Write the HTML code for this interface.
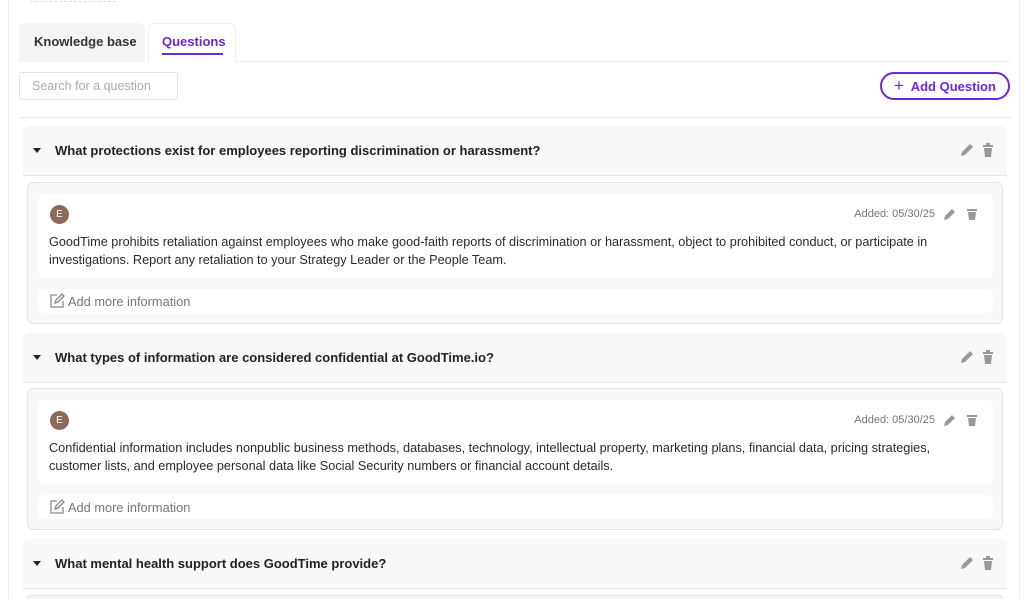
<!DOCTYPE html>
<html><head><meta charset="utf-8"><style>
*{box-sizing:border-box;margin:0;padding:0}
html,body{width:1024px;height:599px;overflow:hidden}
body{background:#fff;font-family:"Liberation Sans",sans-serif;color:#222;position:relative}
.a{position:absolute}
.hdr{position:absolute;left:23px;width:984px;height:50px;background:#f8f8fa;border-bottom:1px solid #e6e6ea;border-radius:6px 6px 0 0}
.hdr .t{position:absolute;left:32px;top:17px;font-size:13px;font-weight:bold;color:#222}
.hdr .c{position:absolute;left:10px;top:22px;width:0;height:0;border-left:4px solid transparent;border-right:4px solid transparent;border-top:5px solid #222}
.hdr .ic{position:absolute;right:12px;top:16px}
.box{position:absolute;left:27px;width:976px;height:142px;background:#f8f8fa;border:1px solid #e3e3e8;border-radius:6px}
.card{position:absolute;left:10px;top:11px;width:955px;height:84px;background:#fff;border-radius:6px}
.av{position:absolute;left:12px;top:11px;width:19px;height:19px;border-radius:50%;background:#8b6a5c;color:#fff;font-size:10px;text-align:center;line-height:19px}
.txt{position:absolute;left:11px;top:39px;width:925px;font-size:12.7px;line-height:18px;color:#2a2a2a}
.date{position:absolute;right:14px;top:13px;font-size:11px;color:#777;display:flex;align-items:center;gap:8px}
.more{position:absolute;left:10px;top:106px;width:955px;height:24px;background:#fff;border-radius:6px;font-size:12.8px;color:#777;padding:5px 0 0 30px}
.more svg{position:absolute;left:11px;top:4px}
</style></head><body>
<div class="a" style="left:8px;top:0;width:1px;height:599px;background:#eee"></div>
<div class="a" style="left:1019px;top:0;width:1px;height:599px;background:#eee"></div>
<div class="a" style="left:30px;top:0;width:86px;height:2px;border-bottom:1px dashed #ddd"></div>

<div class="a" style="left:19px;top:23px;width:126px;height:39px;background:#f5f5f5;border-radius:6px 6px 0 0;font-size:13px;font-weight:bold;color:#333;padding:11px 0 0 15px">Knowledge base</div>
<div class="a" style="left:148px;top:23px;width:88px;height:39px;background:#fff;border:1px solid #eee;border-bottom:none;border-radius:6px 6px 0 0;font-size:13px;font-weight:bold;color:#6d28d9;padding:10px 0 0 13px">Questions<div style="position:absolute;left:13px;top:29px;width:61px;height:2px;background:#6d28d9"></div></div>
<div class="a" style="left:236px;top:61px;width:775px;height:1px;background:#eee"></div>

<div class="a" style="left:19px;top:72px;width:159px;height:28px;border:1px solid #e2e2e2;border-radius:3px;font-size:12.5px;color:#aaa;padding:6px 0 0 12px">Search for a question</div>
<div class="a" style="left:880px;top:72px;width:130px;height:28px;border:2px solid #6d28d9;border-radius:14px;font-size:13px;font-weight:bold;color:#6d28d9;line-height:24px;text-align:center;white-space:nowrap"><span style="font-size:17px;font-weight:normal">+</span>&nbsp; Add Question</div>
<div class="a" style="left:19px;top:117px;width:992px;height:1px;background:#eaeaea"></div>

<div class="hdr" style="top:126px"><div class="c"></div><div class="t">What protections exist for employees reporting discrimination or harassment?</div>
<div class="ic"><svg width="36" height="16" viewBox="0 0 36 16"><path d="M2 14l1-4 8-8 3 3-8 8z" fill="#999"/><rect x="24" y="3" width="10" height="2" fill="#999"/><rect x="27" y="1" width="4" height="2" fill="#999"/><path d="M25 6h8l-1 9h-6z" fill="#999"/></svg></div></div>
<div class="box" style="top:182px"><div class="card"><div class="av">E</div><div class="date">Added: 05/30/25 <svg width="36" height="14" viewBox="0 0 36 14"><path d="M1 13l1-4 7-7 3 3-7 7z" fill="#999"/><rect x="24" y="2" width="10" height="2" fill="#999"/><path d="M25 5h8l-1 8h-6z" fill="#999"/></svg></div>
<div class="txt">GoodTime prohibits retaliation against employees who make good-faith reports of discrimination or harassment, object to prohibited conduct, or participate in investigations. Report any retaliation to your Strategy Leader or the People Team.</div></div>
<div class="more"><svg width="16" height="16" viewBox="0 0 16 16" fill="none" stroke="#888" stroke-width="1.3"><path d="M8 2H2v12h12V8"/><path d="M6 10l1-3 6-6 2 2-6 6z"/></svg>Add more information</div></div>

<div class="hdr" style="top:333px"><div class="c"></div><div class="t">What types of information are considered confidential at GoodTime.io?</div>
<div class="ic"><svg width="36" height="16" viewBox="0 0 36 16"><path d="M2 14l1-4 8-8 3 3-8 8z" fill="#999"/><rect x="24" y="3" width="10" height="2" fill="#999"/><rect x="27" y="1" width="4" height="2" fill="#999"/><path d="M25 6h8l-1 9h-6z" fill="#999"/></svg></div></div>
<div class="box" style="top:388px"><div class="card"><div class="av">E</div><div class="date">Added: 05/30/25 <svg width="36" height="14" viewBox="0 0 36 14"><path d="M1 13l1-4 7-7 3 3-7 7z" fill="#999"/><rect x="24" y="2" width="10" height="2" fill="#999"/><path d="M25 5h8l-1 8h-6z" fill="#999"/></svg></div>
<div class="txt">Confidential information includes nonpublic business methods, databases, technology, intellectual property, marketing plans, financial data, pricing strategies, customer lists, and employee personal data like Social Security numbers or financial account details.</div></div>
<div class="more"><svg width="16" height="16" viewBox="0 0 16 16" fill="none" stroke="#888" stroke-width="1.3"><path d="M8 2H2v12h12V8"/><path d="M6 10l1-3 6-6 2 2-6 6z"/></svg>Add more information</div></div>

<div class="hdr" style="top:539px"><div class="c"></div><div class="t">What mental health support does GoodTime provide?</div>
<div class="ic"><svg width="36" height="16" viewBox="0 0 36 16"><path d="M2 14l1-4 8-8 3 3-8 8z" fill="#999"/><rect x="24" y="3" width="10" height="2" fill="#999"/><rect x="27" y="1" width="4" height="2" fill="#999"/><path d="M25 6h8l-1 9h-6z" fill="#999"/></svg></div></div>
<div class="box" style="top:595px;height:4px;border-bottom:none;border-radius:6px 6px 0 0"></div>
</body></html>
